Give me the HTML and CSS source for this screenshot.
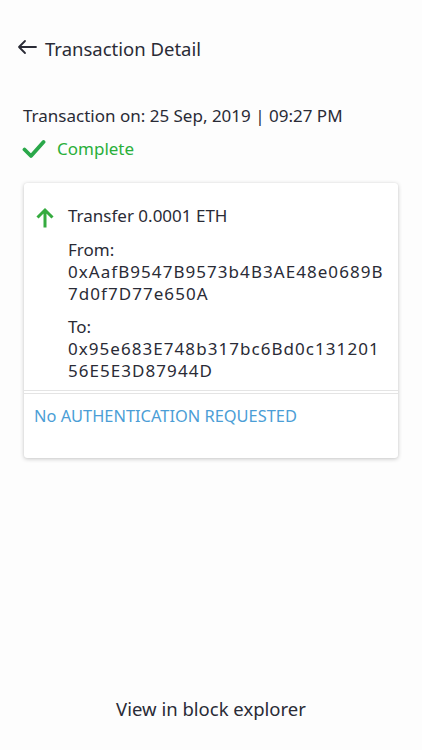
FILE: index.html
```html
<!DOCTYPE html>
<html>
<head>
<meta charset="utf-8">
<link rel="stylesheet" href="styles.css">
</head>
<body>
<div class="screen">
  <header class="topbar">
    <svg class="back" width="20" height="16" viewBox="0 0 20 16"><path d="M19 8H2M8 2L2 8l6 6" fill="none" stroke="#2a2b36" stroke-width="1.8" stroke-linecap="round" stroke-linejoin="round"/></svg>
    <h1 class="title">Transaction Detail</h1>
  </header>
  <div class="meta">
    <p class="date">Transaction on: 25 Sep, 2019 | 09:27 PM</p>
    <div class="status">
      <svg width="24" height="20" viewBox="0 0 24 20"><path d="M2.5 10.5l6.5 6.5L21.5 3" fill="none" stroke="#2aa84a" stroke-width="3.8" stroke-linecap="round" stroke-linejoin="round"/></svg>
      <span>Complete</span>
    </div>
  </div>
  <section class="card">
    <div class="card-body">
      <div class="row">
        <svg class="up" width="20" height="22" viewBox="0 0 20 22"><path d="M10 21.5V4M2.5 11.5L10 4l7.5 7.5" fill="none" stroke="#35ab3f" stroke-width="3" stroke-linejoin="miter"/></svg>
        <div class="info">
          <p class="amount">Transfer 0.0001 ETH</p>
          <div class="party">
            <p>From:</p>
            <p class="addr"><span>0xAafB9547B9573b4B3AE48e0689B</span><span>7d0f7D77e650A</span></p>
          </div>
          <div class="party">
            <p>To:</p>
            <p class="addr"><span>0x95e683E748b317bc6Bd0c131201</span><span>56E5E3D87944D</span></p>
          </div>
        </div>
      </div>
    </div>
    <div class="card-foot">No AUTHENTICATION REQUESTED</div>
  </section>
  <div class="spacer"></div>
  <footer class="explorer">View in block explorer</footer>
</div>
</body>
</html>
```
FILE: styles.css
```css
* { box-sizing: border-box; }
html, body { margin: 0; padding: 0; background: #fdfdfd; }
body { font-family: "Noto Sans", "Open Sans", sans-serif; color: #2a2b36; }
p, h1 { margin: 0; }
.screen { width: 422px; height: 750px; display: flex; flex-direction: column; }
.topbar { display: flex; align-items: center; height: 96px; padding: 0 0 0 17px; }
.back { margin-right: 8px; margin-top: -2px; }
.title { font-size: 18.5px; font-weight: 400; margin-top: 0; }
.meta { padding: 8px 0 0 23px; }
.date { font-size: 17px; line-height: 24px; }
.status { display: flex; align-items: center; margin-top: 9px; color: #2aaf3a; font-size: 17px; }
.status svg { margin-left: -1px; margin-right: 11px; }
.card { margin: 23px 24px 0 24px; background: #fff; border-radius: 3px; box-shadow: 0 1px 4px rgba(0,0,0,0.22), 0 0 1px rgba(0,0,0,0.1); }
.card-body { padding: 24px 12px 8px 11px; border-bottom: 4px double #e4e4e4; }
.row { display: flex; }
.up { margin-right: 13px; margin-top: -1px; flex: none; }
.info { font-size: 17px; line-height: 22px; }
.amount { margin-bottom: 12px; margin-top: -2px; }
.party { margin-bottom: 11px; }
.party:last-child { margin-bottom: 0; }
.addr { letter-spacing: 1.05px; }
.addr span { display: block; }
.card-foot { padding: 12px 10px 32px 10px; color: #4b9ed6; font-size: 16.4px; line-height: 20px; }
.spacer { flex: 1; }
.explorer { text-align: center; font-size: 18.5px; height: 60px; line-height: 38px; }
```
